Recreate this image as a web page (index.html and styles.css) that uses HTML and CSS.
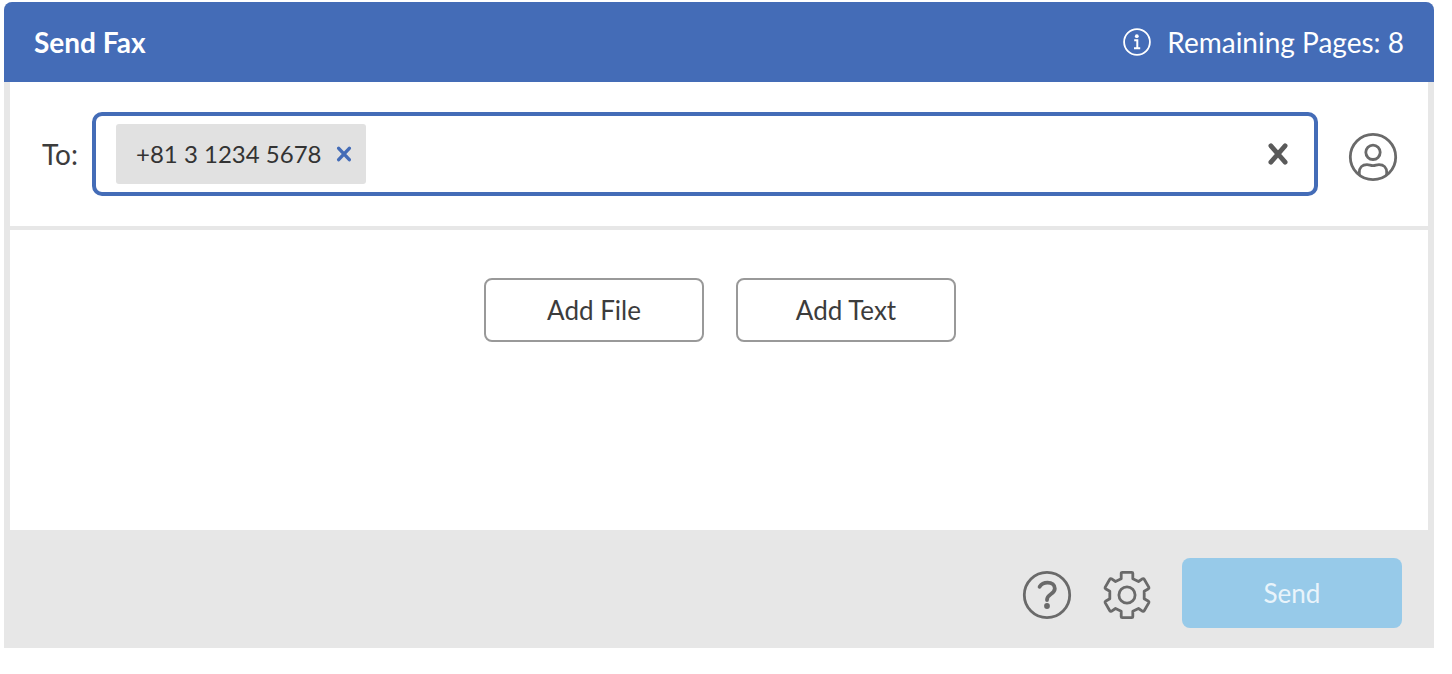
FILE: index.html
```html
<!DOCTYPE html>
<html lang="en">
<head>
<meta charset="utf-8">
<title>Send Fax</title>
<link rel="stylesheet" href="styles.css">
</head>
<body>
<main class="panel">
  <header class="panel-header">
    <h1 class="title">Send Fax</h1>
    <div class="quota">
      <svg class="info-icon" viewBox="0 0 28 28" aria-hidden="true">
        <circle cx="14" cy="14" r="12.9" fill="none" stroke="currentColor" stroke-width="1.8"/>
        <circle cx="13.8" cy="8.2" r="1.9" fill="currentColor"/>
        <path d="M11.2 12.2H14.3V20M11 20.3H17.2" fill="none" stroke="currentColor" stroke-width="2"/>
      </svg>
      <span>Remaining Pages: 8</span>
    </div>
  </header>
  <section class="recipients">
    <label class="to-label" for="to">To:</label>
    <div class="field">
      <span class="chip">
        <span>+81 3 1234 5678</span>
        <button class="chip-remove" type="button" aria-label="Remove +81 3 1234 5678">
          <svg class="chip-cross" viewBox="0 0 16 16"><path d="M2.7 2.3L13.3 13.7M13.3 2.3L2.7 13.7" fill="none" stroke="currentColor" stroke-width="3.4" stroke-linecap="round"/></svg>
        </button>
      </span>
      <input class="to-input" id="to" type="text">
      <button class="clear" type="button" aria-label="Clear recipients">
        <svg class="clear-cross" viewBox="0 0 20 22"><path d="M2.9 2.9L17.1 19.1M17.1 2.9L2.9 19.1" fill="none" stroke="currentColor" stroke-width="4.8" stroke-linecap="round"/></svg>
      </button>
    </div>
    <button class="icon-button" type="button" aria-label="Contacts">
      <svg class="icon" viewBox="0 0 50 50">
        <circle cx="25" cy="25" r="22.7"/>
        <circle cx="25" cy="20.3" r="7.2"/>
        <path d="M11.3 43V40.5C11.3 35.5 14.3 32.7 19 32.7C21.5 32.7 22.5 33.7 25 33.7S28.5 32.7 31 32.7C35.7 32.7 38.7 35.5 38.7 40.5V43"/>
      </svg>
    </button>
  </section>
  <section class="content">
    <button class="add-button" type="button">Add File</button>
    <button class="add-button" type="button">Add Text</button>
  </section>
  <footer class="panel-footer">
    <button class="icon-button" type="button" aria-label="Help">
      <svg class="icon" viewBox="0 0 50 50">
        <circle cx="25" cy="25" r="22.7"/>
        <path class="heavy" d="M17.6 16.8C19.5 13.8 22.2 12.6 25.5 12.6C30 12.6 32.8 15 32.8 18.5C32.8 24.5 25 23.5 25 30"/>
        <circle class="dot" cx="25" cy="36" r="2.9"/>
      </svg>
    </button>
    <button class="icon-button" type="button" aria-label="Settings">
      <svg class="icon" viewBox="0 0 50 50">
        <circle cx="25" cy="25" r="8.1"/>
        <path d="M19.2 8.8V3.2Q19.2 2.3 20.3 2.3H29.7Q30.8 2.3 30.8 3.2V8.8L36.5 11.5L40.7 8.7Q41.6 8.3 42.2 9.2L46.9 17.4Q47.2 18.2 46.5 18.8L42.2 21.3V28.7L46.5 31.2Q47.2 31.8 46.9 32.6L42.2 40.8Q41.6 41.7 40.7 41.3L36.5 38.5L30.8 41.2V46.8Q30.8 47.7 29.7 47.7H20.3Q19.2 47.7 19.2 46.8V41.2L13.5 38.5L9.3 41.3Q8.4 41.7 7.8 40.8L3.1 32.6Q2.8 31.8 3.5 31.2L7.8 28.7V21.3L3.5 18.8Q2.8 18.2 3.1 17.4L7.8 9.2Q8.4 8.3 9.3 8.7L13.5 11.5Z"/>
      </svg>
    </button>
    <button class="send" type="button" disabled>Send</button>
  </footer>
</main>
</body>
</html>
```
FILE: styles.css
```css
* {
  box-sizing: border-box;
}

body {
  margin: 2px 18px 26px 4px;
  background: #fff;
  color: #3c3c3c;
  font-family: Lato, "Liberation Sans", sans-serif;
  font-size: 28px;
  line-height: 36px;
}

button,
input {
  margin: 0;
  padding: 0;
  border: 0;
  background: none;
  color: inherit;
  font: inherit;
}

.panel {
  border-radius: 8px 8px 0 0;
  background: #e7e7e7;
  overflow: hidden;
}

.panel-header {
  display: flex;
  align-items: center;
  justify-content: space-between;
  height: 80px;
  padding: 0 30px;
  background: #446cb7;
  color: #fff;
}

.title {
  margin: 0;
  font-size: 28px;
  font-weight: 700;
}

.quota {
  display: flex;
  align-items: center;
  gap: 16px;
}

.info-icon {
  width: 28px;
  height: 28px;
}

.recipients {
  display: flex;
  align-items: center;
  margin: 0 6px 4px;
  padding: 30px 30px 30px 32px;
  background: #fff;
}

.to-label {
  flex: none;
  width: 50px;
}

.field {
  display: flex;
  flex: 1;
  align-items: center;
  height: 84px;
  margin-right: 30px;
  padding: 0 26px 0 20px;
  border: 4px solid #446cb7;
  border-radius: 10px;
}

.chip {
  display: flex;
  flex: none;
  align-items: center;
  gap: 15px;
  height: 60px;
  padding: 0 14px 0 20px;
  border-radius: 3px;
  background: #e1e1e1;
  color: #333;
  font-size: 24px;
}

.chip-remove,
.clear {
  display: flex;
  flex: none;
}

.chip-remove {
  color: #446cb7;
}

.clear {
  color: #5a5a5a;
}

.chip-cross {
  width: 16px;
  height: 16px;
}

.clear-cross {
  width: 20px;
  height: 22px;
}

.to-input {
  flex: 1;
  min-width: 0;
  height: 60px;
  outline: none;
}

.icon-button {
  display: flex;
  flex: none;
  padding-top: 4px;
  color: #6a6a6a;
}

.recipients .icon-button {
  padding-top: 6px;
}

.icon {
  width: 50px;
  height: 50px;
  fill: none;
  stroke: currentColor;
  stroke-width: 2.8;
  stroke-linejoin: round;
}

.heavy {
  stroke-width: 3.8;
  stroke-linecap: round;
}

.dot {
  fill: currentColor;
  stroke: none;
}

.content {
  display: flex;
  align-items: flex-start;
  justify-content: center;
  gap: 32px;
  min-height: 300px;
  margin: 0 6px;
  padding: 48px 30px 48px 32px;
  background: #fff;
}

.add-button {
  width: 220px;
  height: 64px;
  border: 2px solid #999;
  border-radius: 8px;
  font-size: 26px;
}

.panel-footer {
  display: flex;
  align-items: center;
  justify-content: flex-end;
  gap: 30px;
  padding: 28px 32px 20px;
}

.send {
  width: 220px;
  height: 70px;
  border-radius: 8px;
  background: #97cae9;
  color: #e9f4fb;
  font-size: 26px;
}
```
